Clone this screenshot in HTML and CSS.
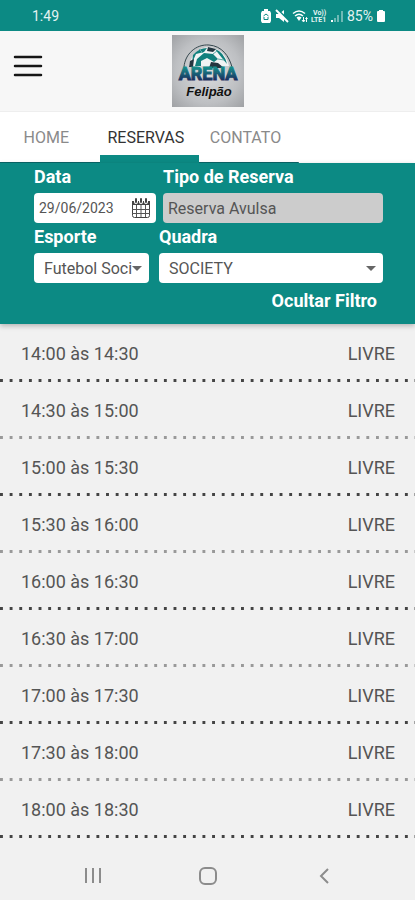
FILE: index.html
```html
<!DOCTYPE html>
<html lang="pt-BR">
<head>
    <meta charset="UTF-8">
    <meta name="viewport" content="width=device-width, initial-scale=1.0">
    <title>Arena Felipão - Reservas</title>
    <link rel="stylesheet" href="styles.css">
</head>
<body>
    <div class="status-bar">
        <span class="clock">1:49</span>
        <div class="status-icons">
            <svg width="12" height="14" viewBox="0 0 12 14">
                <path fill="#fff" d="M4 0h4v2h2l1 2v8l-1 2H2l-1-2V4l1-2h2z"/>
                <path fill="none" stroke="#0c8a84" d="M3.500 7L6 5l2.500 2M4 8v2.500h4V8"/>
            </svg>
            <svg width="14" height="14" viewBox="0 0 14 14">
                <path fill="#fff" d="M1 5h3l5-4v12L4 9H1z"/>
                <path stroke="#0c8a84" stroke-width="2" d="M3 1l11 11"/>
                <path stroke="#fff" stroke-width="2" d="M1 1l12 12"/>
            </svg>
            <svg width="16" height="14" viewBox="0 0 16 14">
                <path fill="none" stroke="#fff" stroke-width="1.500" d="M1 4.500q6-5 12 0M3 7q4-3.500 8 0"/>
                <path fill="#fff" d="M4.500 8.500q2.500-2 5 0L7 12z"/>
                <path fill="none" stroke="#fff" d="M11.500 8v4.500M10 11l1.500 2 1.500-2M14.500 13V8.500M13.500 10l1-1.500 1 1.500"/>
            </svg>
            <svg width="16" height="14" viewBox="0 0 16 14">
                <text class="volte" x="2" y="6">Vo))</text>
                <text class="volte" x="0" y="13">LTE1</text>
            </svg>
            <svg width="14" height="14" viewBox="0 0 14 14">
                <path fill="#fff" d="M1 11h2v2H1z"/>
                <path fill="#6fb9b5" d="M4 9h2v4H4zM7 6h2v7H7zM11 2h2v11h-2z"/>
            </svg>
            <span class="battery">85%</span>
            <svg width="10" height="14" viewBox="0 0 10 14">
                <path fill="#fff" d="M3 1h4v1h1q1 0 1 1v9q0 1-1 1H2q-1 0-1-1V3q0-1 1-1h1z"/>
            </svg>
        </div>
    </div>

    <header class="header">
        <button type="button" class="menu" aria-label="Menu">
            <svg width="30" height="24" viewBox="0 0 30 24">
                <path stroke="#161616" stroke-width="2.500" stroke-linecap="round" d="M2 3h26M2 12h26M2 21h26"/>
            </svg>
        </button>
        <svg class="logo" width="72" height="72" viewBox="0 0 72 72" role="img" aria-label="Arena Felipão">
            <defs>
                <radialGradient id="steel" cx=".5" cy=".5" r=".75">
                    <stop offset="0" stop-color="#dcdddf"/>
                    <stop offset=".6" stop-color="#bdbfc2"/>
                    <stop offset="1" stop-color="#9a9c9f"/>
                </radialGradient>
                <linearGradient id="ink" x1="0" y1="0" x2="0" y2="1">
                    <stop offset=".2" stop-color="#168f8c"/>
                    <stop offset=".9" stop-color="#1b2158"/>
                </linearGradient>
            </defs>
            <rect width="72" height="72" fill="url(#steel)"/>
            <path fill="none" stroke="#34464d" d="M12 32C13 19 24 9 37 10S57 21 60 32"/>
            <path fill="#f1f4f4" d="M17 31q4-18 20-19 16 2 20 19z"/>
            <path fill="#12807d" d="M21 20q6-7 14-7l-3 4-8 2-4 9zM25 24l7-6 9 1 5 5-4 3-7-4-6 3v5h-6zM43 14q9 3 12 15l-5-6-4-5z"/>
            <path fill="#243640" d="M36 12l8 2-3 3-6-1zM39 27l7 1 6 5H37zM18 26l4-2-1 8h-4z"/>
            <path fill="none" stroke="#5eaaa7" d="M27 14l4 4M41 19l4-3M46 24l6 1"/>
            <text class="logo-arena" x="36" y="45" text-anchor="middle">ARENA</text>
            <text class="logo-name" x="37" y="61" text-anchor="middle">Felipão</text>
        </svg>
    </header>

    <nav class="tabs">
        <a href="#home" class="tab">HOME</a>
        <a href="#reservas" class="tab active">RESERVAS</a>
        <a href="#contato" class="tab">CONTATO</a>
    </nav>

    <form class="filter">
        <div class="filter-row first">
            <div class="field">
                <label for="data">Data</label>
                <div class="control date">
                    <input type="text" id="data" name="data" value="29/06/2023">
                    <button type="button" aria-label="Abrir calendário">
                        <svg width="20" height="22" viewBox="0 0 20 22">
                            <path fill="#fff" stroke="#444" d="M1.500 4.500h17v14q0 2-2 2h-13q-2 0-2-2z"/>
                            <path fill="#444" d="M1 4h18v4H1z"/>
                            <path fill="none" stroke="#555" d="M1 12.500h18M1 16.500h18M5.500 8v12M10 8v12M14.500 8v12"/>
                            <path stroke="#fff" stroke-width="4" stroke-linecap="round" d="M5 3v2M10 3v2M15 3v2"/>
                            <path stroke="#444" stroke-width="2" stroke-linecap="round" d="M5 2v3M10 2v3M15 2v3"/>
                        </svg>
                    </button>
                </div>
            </div>
            <div class="field">
                <label for="tipo">Tipo de Reserva</label>
                <input type="text" id="tipo" name="tipo" class="control locked" value="Reserva Avulsa" disabled>
            </div>
        </div>
        <div class="filter-row second">
            <div class="field">
                <label for="esporte">Esporte</label>
                <div class="control select">
                    <select id="esporte" name="esporte">
                        <option>Futebol Society</option>
                    </select>
                </div>
            </div>
            <div class="field">
                <label for="quadra">Quadra</label>
                <div class="control select">
                    <select id="quadra" name="quadra">
                        <option>SOCIETY</option>
                    </select>
                </div>
            </div>
        </div>
        <button type="button" class="toggle-filter">Ocultar Filtro</button>
    </form>

    <ul class="slots">
        <li><span>14:00 às 14:30</span><span>LIVRE</span></li>
        <li><span>14:30 às 15:00</span><span>LIVRE</span></li>
        <li><span>15:00 às 15:30</span><span>LIVRE</span></li>
        <li><span>15:30 às 16:00</span><span>LIVRE</span></li>
        <li><span>16:00 às 16:30</span><span>LIVRE</span></li>
        <li><span>16:30 às 17:00</span><span>LIVRE</span></li>
        <li><span>17:00 às 17:30</span><span>LIVRE</span></li>
        <li><span>17:30 às 18:00</span><span>LIVRE</span></li>
        <li><span>18:00 às 18:30</span><span>LIVRE</span></li>
    </ul>

    <div class="system-nav">
        <button type="button" aria-label="Recentes">
            <svg width="20" height="20" viewBox="0 0 20 20">
                <path stroke="#8c8c8c" stroke-width="2" d="M3 2v15M10 2v15M17 2v15"/>
            </svg>
        </button>
        <button type="button" aria-label="Início">
            <svg width="20" height="20" viewBox="0 0 20 20">
                <rect x="2" y="2" width="16" height="16" rx="5" fill="none" stroke="#8c8c8c" stroke-width="2"/>
            </svg>
        </button>
        <button type="button" aria-label="Voltar">
            <svg width="20" height="20" viewBox="0 0 20 20">
                <path fill="none" stroke="#8c8c8c" stroke-width="2" d="M14 3L7 10l7 7"/>
            </svg>
        </button>
    </div>
</body>
</html>
```
FILE: styles.css
```css
* {
    box-sizing: border-box;
}
body {
    margin: 0;
    min-height: 100vh;
    display: flex;
    flex-direction: column;
    font-family: Roboto, "Liberation Sans", sans-serif;
    background-color: #f1f1f1;
    color: #555;
}
button {
    padding: 0;
    border: none;
    background: none;
    font-family: inherit;
    cursor: pointer;
}
svg {
    display: block;
}

/* Status bar */
.status-bar {
    display: flex;
    justify-content: space-between;
    align-items: center;
    height: 31px;
    padding: 1px 29px 0 32px;
    background-color: #0c8a84;
    color: #e4f3f2;
    font-size: 14px;
}
.status-icons {
    display: flex;
    align-items: center;
    gap: 3px;
}
.volte {
    font-size: 7px;
    font-weight: bold;
    fill: #e4f3f2;
}

/* Header */
.header {
    display: grid;
    grid-template-columns: 1fr auto 1fr;
    align-items: center;
    height: 81px;
    padding: 0 12px 0 13px;
    background-color: #f7f7f7;
    border-bottom: 1px solid #eee;
}
.menu {
    justify-self: start;
    padding-bottom: 10px;
}
.logo-arena {
    font-size: 18px;
    font-weight: bold;
    fill: url(#ink);
    stroke: url(#ink);
}
.logo-name {
    font-family: "Liberation Sans", sans-serif;
    font-size: 13px;
    font-weight: bold;
    font-style: italic;
    fill: #111;
}

/* Tabs */
.tabs {
    display: flex;
    height: 51px;
    background: linear-gradient(#0a6668, #0a6668) left bottom / 72% 1px no-repeat #fff;
}
.tab {
    width: 24%;
    padding-right: 7px;
    line-height: 51px;
    text-align: center;
    text-decoration: none;
    font-size: 16px;
    color: #8a8a8a;
}
.tab.active {
    color: #333;
    border-bottom: 8px solid #0c8a84;
}

/* Filter */
.filter {
    display: flex;
    flex-direction: column;
    padding: 0 32px 10px 34px;
    background-color: #0c8a84;
    box-shadow: 0 2px 5px rgba(0, 0, 0, 0.25);
}
.filter-row {
    display: grid;
}
.filter-row.first {
    grid-template-columns: 122fr 220fr;
    gap: 7px;
}
.filter-row.second {
    grid-template-columns: 115fr 224fr;
    gap: 10px;
}
.field {
    display: flex;
    flex-direction: column;
    min-width: 0;
}
label,
.toggle-filter {
    font-size: 18px;
    font-weight: bold;
    line-height: 27px;
    color: #fff;
}
label {
    margin-bottom: 3px;
}
.control {
    display: flex;
    align-items: center;
    width: 100%;
    height: 30px;
    border: none;
    border-radius: 4px;
    background-color: #fff;
}
input,
select {
    min-width: 0;
    border: none;
    font-family: inherit;
    font-size: 16px;
    color: #555;
}
.date {
    padding: 0 5px;
}
.date input {
    flex: 1;
    padding: 0;
    font-size: 14px;
    background: none;
}
.control.locked {
    padding: 0 5px;
    background-color: #ccc;
}
.select {
    padding: 0 7px 0 10px;
}
.select select {
    flex: 1;
    height: 30px;
    padding: 0;
    appearance: none;
    background: none;
}
.select::after {
    content: "";
    border: 5px solid transparent;
    border-top-color: #666;
    border-bottom: none;
}
.toggle-filter {
    align-self: flex-end;
    margin: 4px 6px 0 0;
}

/* Time slots */
.slots {
    margin: 1px 0 0;
    padding: 0;
    list-style: none;
}
.slots li {
    display: flex;
    justify-content: space-between;
    align-items: center;
    height: 57px;
    padding: 0 20px 0 21px;
    font-size: 18px;
    /* 43 dots along the bottom edge */
    background: linear-gradient(90deg, #444 3px, transparent 3px) left bottom / calc(100% / 43) 3px repeat-x;
}
.slots li:nth-child(even) {
    background-image: linear-gradient(90deg, #999 3px, transparent 3px);
}

/* System navigation */
.system-nav {
    display: flex;
    flex: 1;
    align-items: center;
    justify-content: space-around;
    padding: 14px 33px 0 35px;
}
```
